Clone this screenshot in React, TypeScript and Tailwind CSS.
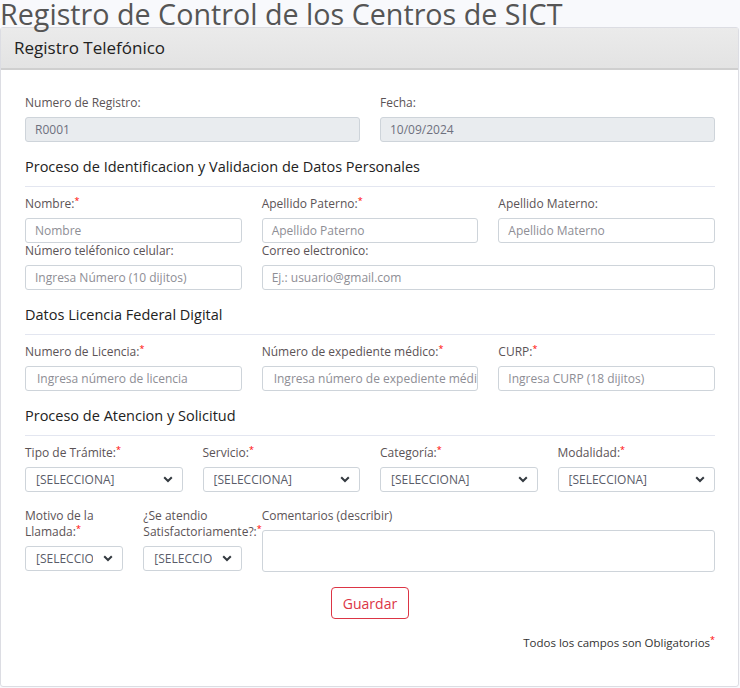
import React from 'react';

const font = { fontFamily: '"Open Sans", "Liberation Sans", sans-serif' };

const Req = () => <span className="text-[#ff0000] text-[9px] align-top leading-none">*</span>;

const Label: React.FC<{ text: string; req?: boolean }> = ({ text, req }) => (
  <label className="block text-[12px] leading-[16px] text-[#5b5356] mb-[6px]">
    {text}
    {req && <Req />}
  </label>
);

const Input: React.FC<{ placeholder?: string; value?: string; disabled?: boolean; indent?: boolean }> = ({ placeholder, value, disabled, indent }) => (
  <div
    className={`h-[25px] border border-[#ced4da] rounded-[3px] flex items-center text-[12px] whitespace-nowrap overflow-hidden ${indent ? 'px-[11px]' : 'px-[9px]'} ${
      disabled ? 'bg-[#e9ecef] text-[#6e707e]' : 'bg-white text-[#8e8e95]'
    }`}
  >
    {value ?? placeholder}
  </div>
);

const Select = () => (
  <div className="h-[25px] border border-[#ced4da] rounded-[3px] bg-white flex items-center pl-[10px] pr-[9px] text-[12px] text-[#5a5c69]">
    <span className="flex-1 overflow-hidden whitespace-nowrap mr-[10px]">[SELECCIONA]</span>
    <svg width="10" height="7" viewBox="0 0 10 7" className="shrink-0">
      <path d="M1.2 1.2 L5 5 L8.8 1.2" fill="none" stroke="#343a40" strokeWidth="2" />
    </svg>
  </div>
);

const Section: React.FC<{ title: string }> = ({ title }) => (
  <div className="mt-[14px]">
    <h2 className="text-[14.5px] leading-[22px] font-medium text-[#222] mb-[8px]">{title}</h2>
    <hr className="border-t border-[#e3e6f0] mb-[9px]" />
  </div>
);

export default function App() {
  return (
    <div className="min-h-screen bg-[#f8f9fc]" style={font}>
      <h1 className="text-[28.7px] leading-[27px] text-[#555] whitespace-nowrap">Registro de Control de los Centros de SICT</h1>
      <div className="w-[739px] bg-white border border-[#dcdde3] rounded-[3px]">
        <div className="h-[42px] bg-gradient-to-b from-[#ebebeb] to-[#e3e3e3] border-b-2 border-[#cfcfcf] flex items-center px-[13px]">
          <span className="text-[17px] font-medium text-[#222]">Registro Telefónico</span>
        </div>
        <div className="pl-[24px] pr-[23px] pt-[25px] pb-[35px]">
          <div className="grid grid-cols-2 gap-x-[20px]">
            <div>
              <Label text="Numero de Registro:" />
              <Input value="R0001" disabled />
            </div>
            <div>
              <Label text="Fecha:" />
              <Input value="10/09/2024" disabled />
            </div>
          </div>

          <Section title="Proceso de Identificacion y Validacion de Datos Personales" />
          <div className="grid grid-cols-3 gap-x-[20px]">
            <div>
              <Label text="Nombre:" req />
              <Input placeholder="Nombre" />
            </div>
            <div>
              <Label text="Apellido Paterno:" req />
              <Input placeholder="Apellido Paterno" />
            </div>
            <div>
              <Label text="Apellido Materno:" />
              <Input placeholder="Apellido Materno" />
            </div>
            <div>
              <Label text="Número teléfonico celular:" />
              <Input placeholder="Ingresa Número (10 dijitos)" />
            </div>
            <div className="col-span-2">
              <Label text="Correo electronico:" />
              <Input placeholder="Ej.: usuario@gmail.com" />
            </div>
          </div>

          <Section title="Datos Licencia Federal Digital" />
          <div className="grid grid-cols-3 gap-x-[20px]">
            <div>
              <Label text="Numero de Licencia:" req />
              <Input placeholder="Ingresa número de licencia" indent />
            </div>
            <div>
              <Label text="Número de expediente médico:" req />
              <Input placeholder="Ingresa número de expediente médico" indent />
            </div>
            <div>
              <Label text="CURP:" req />
              <Input placeholder="Ingresa CURP (18 dijitos)" />
            </div>
          </div>

          <Section title="Proceso de Atencion y Solicitud" />
          <div className="grid grid-cols-4 gap-x-[20px]">
            <div>
              <Label text="Tipo de Trámite:" req />
              <Select />
            </div>
            <div>
              <Label text="Servicio:" req />
              <Select />
            </div>
            <div>
              <Label text="Categoría:" req />
              <Select />
            </div>
            <div>
              <Label text="Modalidad:" req />
              <Select />
            </div>
          </div>

          <div className="grid grid-cols-6 gap-x-[20px] mt-[16px]">
            <div>
              <Label text="Motivo de la Llamada:" req />
              <Select />
            </div>
            <div>
              <Label text="¿Se atendio Satisfactoriamente?:" req />
              <Select />
            </div>
            <div className="col-span-4">
              <Label text="Comentarios (describir)" />
              <div className="h-[42px] border border-[#ced4da] rounded-[3px] bg-white" />
            </div>
          </div>

          <div className="flex justify-center mt-[15px]">
            <button className="w-[78px] h-[32px] border border-[#dc3545] rounded-[4px] text-[#dc3545] text-[14px] bg-white">Guardar</button>
          </div>

          <p className="mt-[16px] text-right text-[11.5px] leading-[16px] font-medium text-[#333]">
            Todos los campos son Obligatorios
            <Req />
          </p>
        </div>
      </div>
    </div>
  );
}
